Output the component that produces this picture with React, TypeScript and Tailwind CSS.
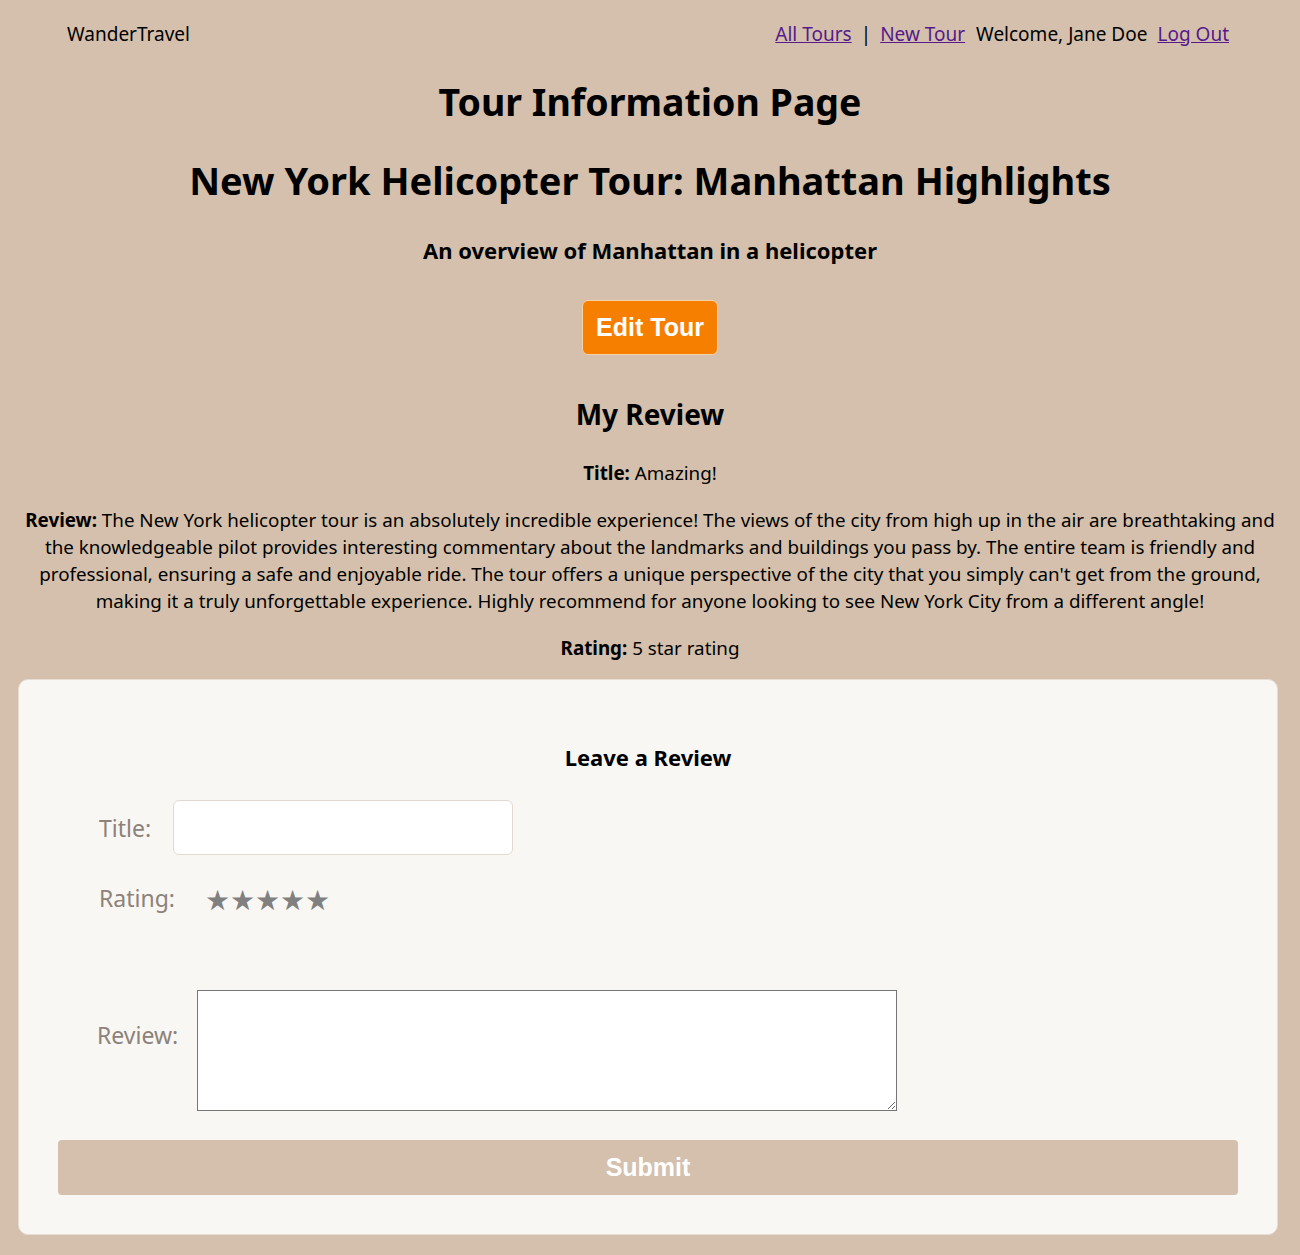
import React from "react";

const font = { fontFamily: '"Noto Sans", "Open Sans", sans-serif' };
const arial = { fontFamily: '"Liberation Sans", Arial, sans-serif' };

function NavBar() {
  return (
    <nav className="flex items-center justify-between pl-[67px] pr-[71px] h-[68px] text-[19px] text-black">
      <span>WanderTravel</span>
      <div className="flex items-center">
        <a href="#" className="underline text-[#551a8b]">All Tours</a>
        <span className="mx-[9px]">|</span>
        <a href="#" className="underline text-[#551a8b]">New Tour</a>
        <span className="ml-[11px]">Welcome, Jane Doe</span>
        <a href="#" className="underline text-[#551a8b] ml-[10px]">Log Out</a>
      </div>
    </nav>
  );
}

function ReviewForm() {
  return (
    <div className="mx-[18px] w-[1260px] rounded-[10px] border border-[#e6ddd3] bg-[#f9f7f4] px-[39px] pt-[61px] pb-[39px]">
      <h3 className="text-center text-[22px] font-bold text-black">Leave a Review</h3>

      <div className="mt-[26px] flex items-center">
        <label className="ml-[41px] w-[74px] text-[23px] text-[#8c8279]">Title:</label>
        <input
          type="text"
          className="h-[55px] w-[340px] rounded-[6px] border border-[#e3d9cf] bg-white px-3 outline-none"
        />
      </div>

      <div className="mt-[26px] flex items-center">
        <label className="ml-[41px] w-[106px] text-[23px] text-[#8c8279]">Rating:</label>
        <div className="flex text-[28px] leading-none text-[#808080]">
          <span>★</span>
          <span>★</span>
          <span>★</span>
          <span>★</span>
          <span>★</span>
        </div>
      </div>

      <div className="mt-[74px] flex items-start">
        <label className="ml-[39px] mt-[28px] w-[100px] text-[23px] text-[#8c8279]">Review:</label>
        <textarea className="h-[121px] w-[700px] border border-[#767676] bg-white" />
      </div>

      <button
        className="mt-[29px] h-[55px] w-full rounded-[4px] bg-[#d4c0ac] text-[25px] font-bold text-white"
        style={arial}
      >
        Submit
      </button>
    </div>
  );
}

export default function App() {
  return (
    <div className="min-h-[1255px] w-[1300px] bg-[#d4c0ac] pb-[20px]" style={font}>
      <NavBar />

      <div className="text-center text-black">
        <h1 className="mt-[10px] text-[37.5px] font-bold leading-[48px]">Tour Information Page</h1>
        <h2 className="mt-[30px] text-[38px] font-bold leading-[48px]">
          New York Helicopter Tour: Manhattan Highlights
        </h2>
        <p className="mt-[30px] text-[22px] font-bold">An overview of Manhattan in a helicopter</p>

        <button
          className="mt-[33px] h-[55px] rounded-[6px] border border-[#f5d3a8] bg-[#f77f00] px-[13px] text-[25px] font-bold text-white"
          style={arial}
        >
          Edit Tour
        </button>

        <h3 className="mt-[38px] text-[28px] font-bold">My Review</h3>
        <p className="mt-[24px] text-[18.8px]">
          <b>Title:</b> Amazing!
        </p>
        <p className="mt-[20px] px-[18px] text-[18.8px] leading-[27px]">
          <b>Review:</b> The New York helicopter tour is an absolutely incredible experience! The views of the city from high up in the air are breathtaking and the knowledgeable pilot provides interesting commentary about the landmarks and buildings you pass by. The entire team is friendly and professional, ensuring a safe and enjoyable ride. The tour offers a unique perspective of the city that you simply can't get from the ground, making it a truly unforgettable experience. Highly recommend for anyone looking to see New York City from a different angle!
        </p>
        <p className="mt-[19px] mb-[17px] text-[18.8px]">
          <b>Rating:</b> 5 star rating
        </p>
      </div>

      <ReviewForm />
    </div>
  );
}
